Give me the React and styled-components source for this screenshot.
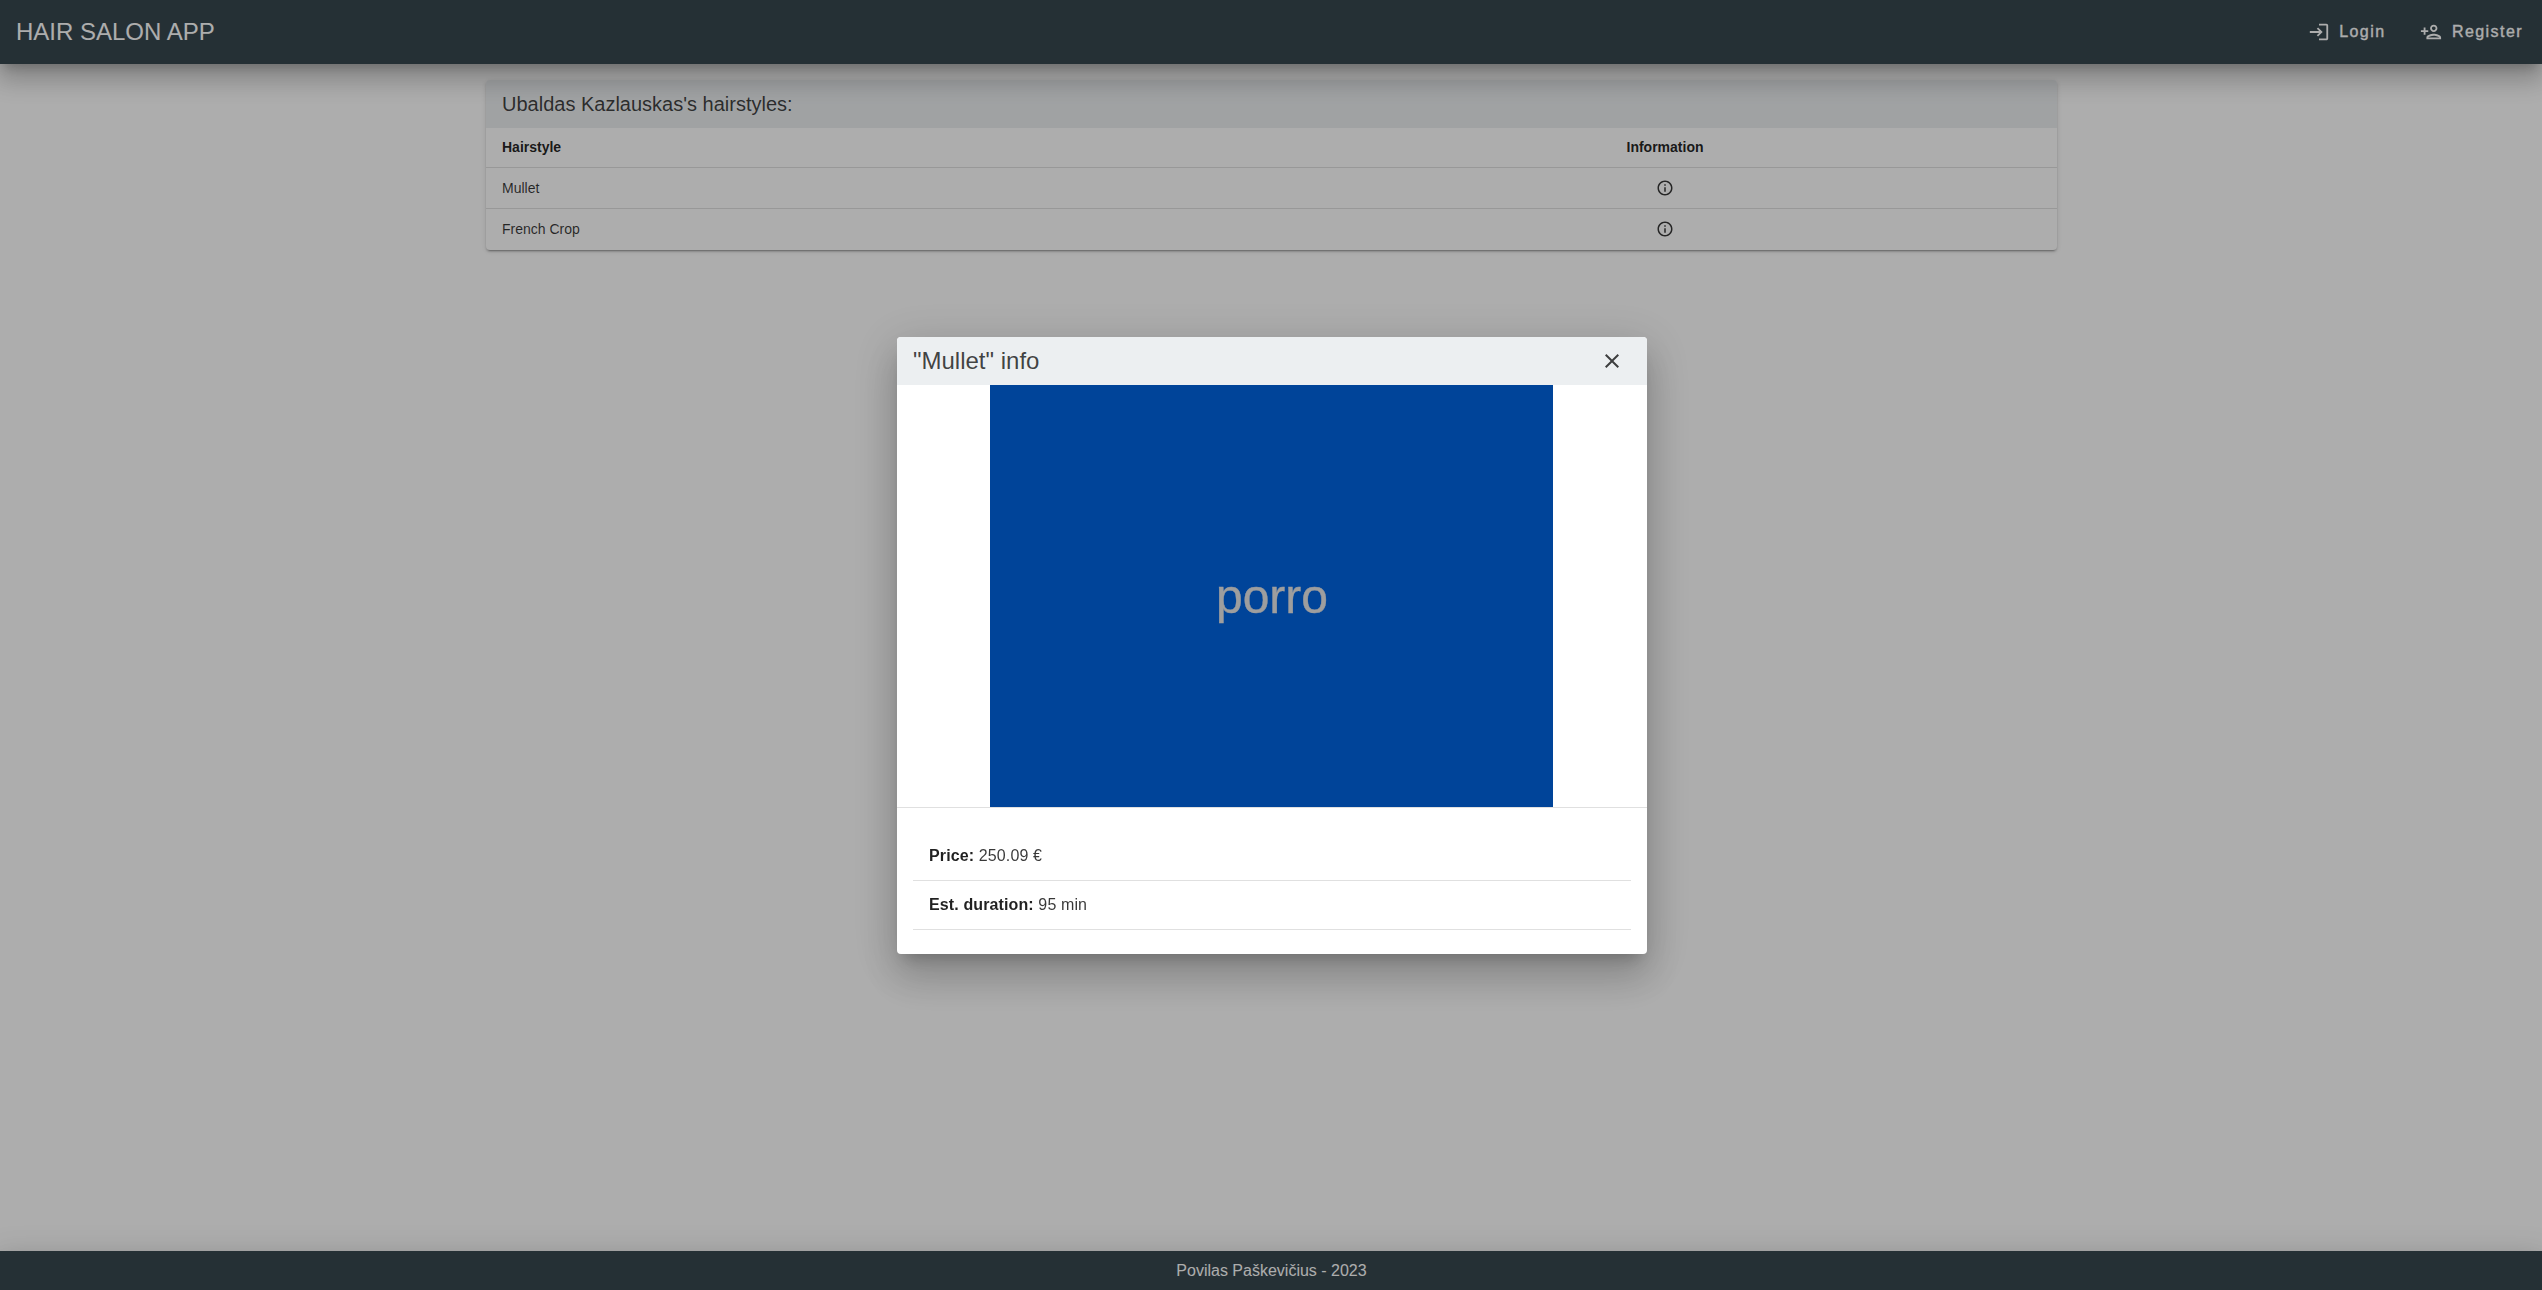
import React from "react";
import styled, { createGlobalStyle } from "styled-components";
import { MdLogin, MdOutlinePersonAdd, MdInfoOutline, MdClose } from "react-icons/md";

const GlobalStyle = createGlobalStyle`
  * { box-sizing: border-box; }
  html, body { margin: 0; height: 100%; overflow: hidden; }
  body { font-family: "Liberation Sans", Arial, sans-serif; background: #fff; color: rgba(0, 0, 0, 0.87); }
`;

const Page = styled.div`
  display: flex;
  flex-direction: column;
  height: 100vh;
`;

const Toolbar = styled.header`
  position: relative;
  z-index: 1;
  display: flex;
  align-items: center;
  justify-content: space-between;
  flex: none;
  height: 64px;
  padding: 0 19px 0 16px;
  background: #37474f;
  color: #fff;
  box-shadow: 0 8px 10px -5px rgba(0, 0, 0, 0.2), 0 16px 24px 2px rgba(0, 0, 0, 0.14),
    0 6px 30px 5px rgba(0, 0, 0, 0.12);
`;

const Brand = styled.h1`
  margin: 0;
  font-size: 24px;
  line-height: 32px;
  font-weight: 400;
`;

const Nav = styled.nav`
  display: flex;
  gap: 35px;
`;

const NavButton = styled.button`
  display: flex;
  align-items: center;
  gap: 9.5px;
  padding: 0 0 1px;
  border: 0;
  background: none;
  color: inherit;
  font: 400 16px/24px "Liberation Sans", Arial, sans-serif;
  letter-spacing: 1.43px;
  -webkit-text-stroke: 0.35px currentColor;
`;

const Main = styled.main`
  flex: 1;
  display: flex;
  justify-content: center;
  align-items: flex-start;
  padding: 16px 0 0 1px;
`;

const Card = styled.section`
  width: 1571px;
  border-radius: 4px;
  overflow: hidden;
  background: #fff;
  box-shadow: 0 3px 1px -2px rgba(0, 0, 0, 0.2), 0 2px 2px 0 rgba(0, 0, 0, 0.14),
    0 1px 5px 0 rgba(0, 0, 0, 0.12);
`;

const CardTitle = styled.h2`
  margin: 0;
  padding: 0 16px;
  height: 48px;
  font-size: 20px;
  line-height: 48px;
  font-weight: 400;
  background: #eceff1;
  color: rgba(0, 0, 0, 0.74);
`;

const Row = styled.div`
  display: grid;
  grid-template-columns: 787px 1fr;
  align-items: center;
  height: ${(p) => (p.$head ? 40 : 41)}px;
  padding-bottom: ${(p) => (p.$head ? 2 : 0)}px;
  border-bottom: 1px solid rgba(0, 0, 0, 0.12);
  font-size: 14px;
  font-weight: ${(p) => (p.$head ? 700 : 400)};
  color: ${(p) => (p.$head ? "rgba(0, 0, 0, 0.87)" : "rgba(0, 0, 0, 0.78)")};
  &:last-child { border-bottom-color: transparent; }
`;

const Cell = styled.div`
  display: flex;
  justify-content: ${(p) => (p.$center ? "center" : "flex-start")};
  padding: 0 16px;
`;

const Footer = styled.footer`
  flex: none;
  height: 39px;
  padding-left: 1px;
  background: #37474f;
  color: #fff;
  text-align: center;
  font-size: 16px;
  line-height: 39px;
  box-shadow: 0 8px 10px -5px rgba(0, 0, 0, 0.2), 0 16px 24px 2px rgba(0, 0, 0, 0.14),
    0 6px 30px 5px rgba(0, 0, 0, 0.12);
`;

const Backdrop = styled.div`
  position: fixed;
  inset: 0;
  z-index: 10;
  display: flex;
  align-items: center;
  justify-content: center;
  padding-left: 2px;
  background: rgba(0, 0, 0, 0.32);
`;

const Dialog = styled.div`
  width: 750px;
  margin-top: 1px;
  border-radius: 4px;
  background: #fff;
  box-shadow: 0 11px 15px -7px rgba(0, 0, 0, 0.2), 0 24px 38px 3px rgba(0, 0, 0, 0.14),
    0 9px 46px 8px rgba(0, 0, 0, 0.12);
`;

const DialogHeader = styled.div`
  display: flex;
  align-items: center;
  justify-content: space-between;
  height: 48px;
  padding: 0 23px 0 16px;
  border-radius: 4px 4px 0 0;
  background: #eceff1;
  color: rgba(0, 0, 0, 0.74);
`;

const DialogTitle = styled.h2`
  margin: 0;
  font-size: 24px;
  line-height: 32px;
  font-weight: 400;
`;

const CloseButton = styled.button`
  display: flex;
  padding: 0;
  border: 0;
  background: none;
  color: inherit;
`;

const Preview = styled.div`
  display: flex;
  justify-content: center;
  padding-right: 1px;
  border-bottom: 1px solid rgba(0, 0, 0, 0.12);
`;

const Picture = styled.div`
  display: flex;
  align-items: center;
  justify-content: center;
  width: 563px;
  height: 422px;
  padding-left: 1px;
  background: #004499;
  color: #9e9e9e;
  font-size: 48px;
  -webkit-text-stroke: 0.4px currentColor;
`;

const Details = styled.div`
  padding: 24px 16px;
`;

const Detail = styled.div`
  height: 49px;
  padding: 0 16px;
  border-bottom: 1px solid rgba(0, 0, 0, 0.12);
  font-size: 16px;
  line-height: 48px;
  letter-spacing: 0.12px;
  color: rgba(0, 0, 0, 0.78);
`;

const Label = styled.b`
  color: rgba(0, 0, 0, 0.87);
`;

const hairstyles = ["Mullet", "French Crop"];

export default function App() {
  return (
    <>
      <GlobalStyle />
      <Page>
        <Toolbar>
          <Brand>HAIR SALON APP</Brand>
          <Nav>
            <NavButton><MdLogin size={22} />Login</NavButton>
            <NavButton><MdOutlinePersonAdd size={22} />Register</NavButton>
          </Nav>
        </Toolbar>
        <Main>
          <Card>
            <CardTitle>Ubaldas Kazlauskas's hairstyles:</CardTitle>
            <Row $head>
              <Cell>Hairstyle</Cell>
              <Cell $center>Information</Cell>
            </Row>
            {hairstyles.map((name) => (
              <Row key={name}>
                <Cell>{name}</Cell>
                <Cell $center><MdInfoOutline size={18} /></Cell>
              </Row>
            ))}
          </Card>
        </Main>
        <Footer>Povilas Paškevičius - 2023</Footer>
      </Page>
      <Backdrop>
        <Dialog role="dialog">
          <DialogHeader>
            <DialogTitle>"Mullet" info</DialogTitle>
            <CloseButton aria-label="Close"><MdClose size={24} /></CloseButton>
          </DialogHeader>
          <Preview><Picture>porro</Picture></Preview>
          <Details>
            <Detail><Label>Price:</Label> 250.09 €</Detail>
            <Detail><Label>Est. duration:</Label> 95 min</Detail>
          </Details>
        </Dialog>
      </Backdrop>
    </>
  );
}
